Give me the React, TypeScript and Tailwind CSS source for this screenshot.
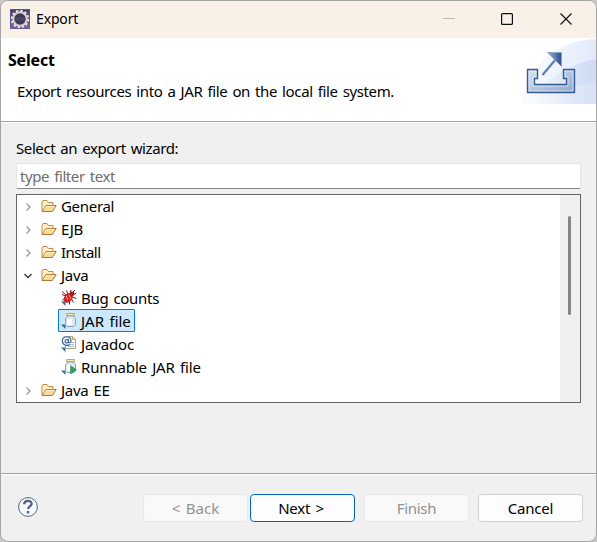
import type { ReactNode } from 'react';

function GearIcon() {
  return (
    <svg className="ml-[9px] h-5 w-5 shrink-0 -translate-y-px" viewBox="0 0 20 20">
      <defs>
        <linearGradient id="gear" x1="0" y1="0" x2="0" y2="1">
          <stop offset="0" stopColor="#4a4068" />
          <stop offset="1" stopColor="#7966a0" />
        </linearGradient>
      </defs>
      <rect width="20" height="20" fill="url(#gear)" />
      <rect x="0.5" y="0.5" width="19" height="19" fill="none" stroke="#65508e" opacity=".7" />
      <circle cx="10" cy="10" r="8.2" fill="none" stroke="#eeeae4" strokeWidth="2" strokeDasharray="2.4 1.894" />
      <circle cx="10" cy="10" r="6.7" fill="#3d3a55" stroke="#d5d1ce" strokeWidth="2" />
      <path d="M5.5 9h9M5.5 11h9" stroke="#56516f" />
    </svg>
  );
}

function ExportBanner() {
  return (
    <svg className="h-[66px] w-[75px] shrink-0" viewBox="0 0 75 66">
      <defs>
        <linearGradient id="glow"><stop offset="0" stopColor="#fafcff" /><stop offset="1" stopColor="#e2eafa" /></linearGradient>
        <linearGradient id="swoosh"><stop offset="0.2" stopColor="#c5d5f2" stopOpacity="0" /><stop offset="1" stopColor="#c5d4f1" stopOpacity=".7" /></linearGradient>
        <linearGradient id="tray" x1="0" y1="0" x2="1" y2="1"><stop offset="0" stopColor="#d8e2f1" /><stop offset="1" stopColor="#8ea9d0" /></linearGradient>
        <linearGradient id="arrow"><stop offset="0" stopColor="#9db4d8" /><stop offset="1" stopColor="#294f8c" /></linearGradient>
      </defs>
      <path d="M0 66C4 32 34 2 75 1v65Z" fill="url(#glow)" />
      <path d="M0 66C22 43 47 26 75 21v45Z" fill="url(#swoosh)" />
      <path d="M0 66Q30 54 75 43v23Z" fill="#fff" opacity=".2" />
      <path d="M6.5 31.5h10v9h-3v6h32v-6h-3v-9h11v23h-47Z" fill="url(#tray)" />
      <path d="M8 53V33h7v6h-3v9h35v-9h-3v-6h8v20Z" fill="none" stroke="#f4f7fc" opacity=".65" />
      <path d="M6.5 31.5h10v9h-3v6h32v-6h-3v-9h11v23h-47Z" fill="none" stroke="#365b96" strokeWidth="1.4" />
      <path d="M21.5 37 36 20" stroke="#b9c9e2" strokeWidth="3" />
      <path d="M21.5 37 37 18.5" stroke="#5476ad" strokeWidth="1.7" />
      <path d="M26.5 14.5h14v14Z" fill="url(#arrow)" stroke="#8aa4cd" />
    </svg>
  );
}

function FolderIcon() {
  return (
    <svg className="h-4 w-4 shrink-0" viewBox="0 0 16 16">
      <path d="M1 13.5V4.5l1-2h4L7.5 4.5H12v3" fill="#fff0c5" stroke="#c08a50" />
      <path d="M1.2 13.5 5 7.5h10.2l-3.8 6Z" fill="#f8da98" stroke="#b17637" />
      <path d="m3 12 2.6-3.6h7.6" fill="none" stroke="#fff3cb" />
    </svg>
  );
}

function Corner() {
  return <path d="M0 12.5h4.5V17Z" fill="#33699a" />;
}

function BugIcon() {
  return (
    <svg className="h-[18px] w-4 shrink-0" viewBox="0 0 16 18">
      <Corner />
      <path d="m5.5 1.5 1.500 4M10 1 9 5M1 5.500l5 2M1.500 11 7 9.500M8.500 15.500V9M12.500 13.500 10 9M15.500 9.500 10 7.500M15 4.500l-5 1.500M12 3l2-2M1 2.500 5 6" fill="none" stroke="#6d1a1c" />
      <ellipse cx="7.2" cy="9" rx="4" ry="5.2" transform="rotate(40 7.2 9)" fill="#d41f25" />
      <circle cx="11" cy="4.8" r="2.4" fill="#a81820" />
      <path d="m5 7.500 1 1m2-2 1 1m-3 2 1 1m2-2 1 1" stroke="#ffb4a6" strokeWidth="1.1" />
    </svg>
  );
}

function JarIcon({ run = false }: { run?: boolean }) {
  return (
    <svg className="h-[18px] w-4 shrink-0" viewBox="0 0 16 18">
      <Corner />
      <path d="M7 4h5l2.5 2.5V13l-1.500 1.500H6L4.5 13V6.5Z" fill="#dfe9f0" stroke="#8ba4ba" />
      <path d="M6 7h5v6H6Z" fill="#fff" />
      <path d="M5.5 1.500h8v2h-8Z" fill="#f9e9ba" stroke="#cda451" />
      {run && <path d="m9.5 7.5 6 4.2-6 4.3Z" fill="#32a05b" stroke="#278049" strokeWidth=".5" />}
    </svg>
  );
}

function JavadocIcon() {
  return (
    <svg className="h-[18px] w-4 shrink-0" viewBox="0 0 16 18">
      <Corner />
      <path d="M4.5 1.5h7l3 3v9h-10Z" fill="#fffdf8" stroke="#b0a37a" />
      <path d="M11.5 1.5v3h3" fill="#eee0ac" stroke="#b9a66a" />
      <path d="M10 7.5h3M9 9.5h4M7 11.5h6" stroke="#a9bad5" />
      <circle cx="5.7" cy="6" r="4.7" fill="#edf6fb" />
      <path d="M8.8 9.5C6 11.5 1.3 9.8 1.3 6 1.3.2 10 .4 10 5.8c0 2.6-2.5 2.6-2.5.4V4M7.4 6c0 3-3.8 2.5-3.3 0 .4-2.1 3.3-2 3.3 0Z" fill="none" stroke="#315f91" strokeWidth="1.1" />
    </svg>
  );
}

function Folder({ name, open = false, spacing = 'tracking-[-0.3px]' }: { name: string; open?: boolean; spacing?: string }) {
  return (
    <div className="flex h-[23px] items-center pl-[6px]">
      <svg className="mr-[8px] mt-[2px] h-[10px] w-[10px] shrink-0" viewBox="0 0 10 10">
        <path d={open ? 'm1.5 3 3.500 3.500L8.500 3' : 'M3.5 1.5 7 5 3.5 8.5'} fill="none" stroke={open ? '#333' : '#999'} strokeWidth="1.3" />
      </svg>
      <FolderIcon />
      <span className={`ml-[4px] ${spacing}`}>{name}</span>
    </div>
  );
}

function Wizard({ icon, name, selected = false, spacing = 'tracking-[-0.15px]' }: { icon: ReactNode; name: string; selected?: boolean; spacing?: string }) {
  return (
    <div className="flex h-[23px] items-center pl-[41px]">
      <div className={`flex h-[23px] items-center rounded-[1px] border pl-[2px] pr-[3px] ${selected ? 'border-[#0078d4] bg-[#cce8ff]' : 'border-transparent'}`}>
        {icon}<span className={`ml-[4px] whitespace-nowrap ${spacing}`}>{name}</span>
      </div>
    </div>
  );
}

export default function App() {
  return (
    <div className="h-[542px] w-[597px] overflow-hidden bg-[#c8c8c8] font-['Noto_Sans',sans-serif] text-[15px] leading-[20px] text-black [word-spacing:1.5px]">
      <div className="flex h-full w-full flex-col overflow-hidden rounded-[8px] border border-[#a5a5a5] bg-[#f0f0f0]">
        <header className="flex h-[37px] shrink-0 items-center bg-[#f9f1e7]">
          <GearIcon />
          <span className="ml-[6px] pb-[1px] text-[14px] tracking-[-0.15px]">Export</span>
          <svg className="ml-auto mr-[22px] h-3 w-[131px] -translate-y-px" viewBox="0 0 131 12" fill="none">
            <path d="M0 5.5h12" stroke="#bfbab3" />
            <rect x="58.6" y=".6" width="10.8" height="10.8" rx="1" stroke="#111" strokeWidth="1.2" />
            <path d="m117.5.5 11 11m0-11-11 11" stroke="#111" strokeWidth="1.2" />
          </svg>
        </header>
        <section className="flex h-[83px] shrink-0 justify-between bg-white">
          <div className="pl-[7px] pt-3">
            <h1 className="text-[16px] font-bold tracking-[-0.2px]">Select</h1>
            <p className="ml-[9px] mt-[11px] whitespace-nowrap tracking-[-0.37px]">Export resources into a JAR file on the local file system.</p>
          </div>
          <ExportBanner />
        </section>
        <main className="h-[353px] shrink-0 border-b border-t border-[#a0a0a0]">
          <div className="h-full border-t border-white px-[15px] pt-[15px]">
            <label htmlFor="filter" className="block h-[20px] tracking-[-0.4px]">Select an export wizard:</label>
            <input id="filter" placeholder="type filter text" className="mt-[5px] block h-[26px] w-[565px] rounded-[2px] border border-[#e5e5e5] border-b-[#868686] bg-white px-[3px] pb-[1px] tracking-[-0.4px] placeholder:text-[#6d6d6d] [word-spacing:1.5px]" />
            <div className="mt-[5px] flex h-[209px] w-[565px] overflow-hidden border border-[#646464] bg-white">
              <div className="-mt-px h-[208px] grow">
                <Folder name="General" />
                <Folder name="EJB" spacing="tracking-[-0.4px]" />
                <Folder name="Install" spacing="tracking-[-0.5px]" />
                <Folder name="Java" open />
                <Wizard icon={<BugIcon />} name="Bug counts" spacing="tracking-[-0.3px]" />
                <Wizard icon={<JarIcon />} name="JAR file" selected spacing="tracking-[0px]" />
                <Wizard icon={<JavadocIcon />} name="Javadoc" />
                <Wizard icon={<JarIcon run />} name="Runnable JAR file" />
                <Folder name="Java EE" />
              </div>
              <div className="w-5 bg-[#f0f0f0] pl-2 pt-[21px]"><div className="h-[99px] w-[3px] rounded-full bg-[#858585]" /></div>
            </div>
          </div>
        </main>
        <footer className="flex h-[67px] shrink-0 items-start border-t border-white pl-[17px] pt-[19px]">
          <svg className="mt-[3px] h-5 w-5 shrink-0" viewBox="0 0 20 20">
            <circle cx="10" cy="10" r="9.4" fill="#f6f8fa" stroke="#506680" />
            <path d="M6.2 7.2c0-4.6 7.6-4.3 7.4-.3-.2 2.6-3.5 2.4-3.5 5.1M10 14v2.5" fill="none" stroke="#506087" strokeWidth="2.3" />
          </svg>
          <button className="ml-[105px] h-7 w-[105px] rounded-[4px] border border-[#e8e8e8] bg-[#f9f9f9] text-[#929292] [word-spacing:1.5px]">&lt; Back</button>
          <button className="ml-[2px] h-7 w-[105px] rounded-[4px] border border-[#0067c0] bg-[#fdfdfd] pr-[3px] tracking-[-0.2px] [word-spacing:1.5px]">Next &gt;</button>
          <button className="ml-[9px] h-7 w-[105px] rounded-[4px] border border-[#e8e8e8] bg-[#f9f9f9] tracking-[-0.3px] text-[#929292]">Finish</button>
          <button className="ml-[9px] h-7 w-[105px] rounded-[4px] border border-[#d0d0d0] bg-[#fdfdfd] tracking-[-0.2px]">Cancel</button>
        </footer>
      </div>
    </div>
  );
}
